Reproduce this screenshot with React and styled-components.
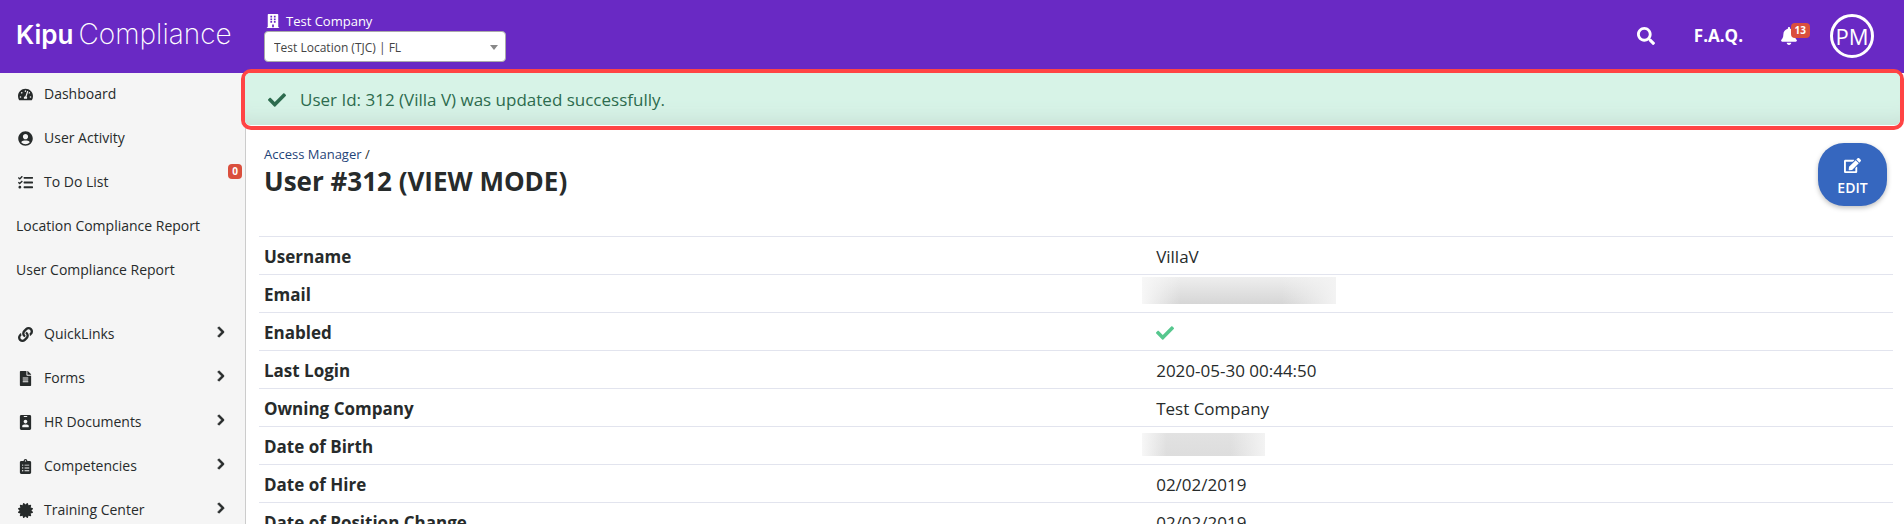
import styled, { createGlobalStyle } from "styled-components";
import {
  FaBell,
  FaBuilding,
  FaCertificate,
  FaCheck,
  FaChevronRight,
  FaClipboardList,
  FaEdit,
  FaFileAlt,
  FaIdBadge,
  FaLink,
  FaSearch,
  FaTachometerAlt,
  FaTasks,
  FaUserCircle,
} from "react-icons/fa";


const GlobalStyle = createGlobalStyle`
  * {
    box-sizing: border-box;
  }

  body {
    margin: 0;
    background-color: #FFFFFF;
    color: #272B2B;
    font-family: "Open Sans", "Noto Sans", sans-serif;
    font-size: 17px;
  }

  a {
    color: inherit;
    text-decoration: none;
  }

  button, select {
    font-family: inherit;
  }
`;

const Page = styled.div`
  height: 100vh;
  overflow: hidden;

  display: flex;
  flex-direction: column;
`;

const HeaderBar = styled.header`
  height: 73px;
  flex-shrink: 0;

  display: flex;
  align-items: center;

  background-color: #6929C4;
  color: #FFFFFF;
`;

const Logo = styled.a`
  padding: 0 0 4px 16px;
  width: 264px;

  display: flex;
  align-items: baseline;
  gap: 5px;

  font-family: Inter, sans-serif;
  font-size: 28px;
  font-weight: 200;
  line-height: 32px;
  white-space: nowrap;

  strong {
    font-size: 26px;
    font-weight: 600;
  }
`;

const LocationPicker = styled.div`
  width: 242px;
  height: 52px;

  display: flex;
  flex-direction: column;
`;

const CompanyLabel = styled.label`
  height: 20px;

  display: flex;
  align-items: center;
  gap: 6px;

  font-size: 13px;
  line-height: 20px;

  svg {
    margin-left: 2px;
    font-size: 14px;
  }
`;

const SelectBox = styled.div`
  position: relative;

  &::after {
    content: "";
    position: absolute;
    top: 14px;
    right: 8px;
    border: 4px solid transparent;
    border-top: 5px solid #888888;
    border-bottom: 0;
    pointer-events: none;
  }
`;

const LocationSelect = styled.select`
  padding: 2px 24px 0 9px;

  width: 100%;
  height: 31px;

  display: block;
  appearance: none;

  background-color: #FFFFFF;
  border: 1px solid #AAAAAA;
  border-radius: 4px;

  color: #444444;
  font-size: 12px;
`;

const HeaderActions = styled.nav`
  margin-left: auto;
  padding: 0 30px 1px 0;

  display: flex;
  align-items: center;
`;

const IconButton = styled.button`
  padding: 0;

  position: relative;
  display: flex;

  background: none;
  border: none;

  color: #FFFFFF;
  font-size: 18px;

  cursor: pointer;
`;

const FaqLink = styled.a`
  margin: 0 37px 0 39px;

  font-size: 17px;
  font-weight: 700;
  line-height: 24px;
`;

const Badge = styled.span`
  padding: 0 4px;

  position: absolute;
  top: ${ props => props.$top };
  right: ${ props => props.$right };

  background-color: #DA4F3D;
  border-radius: 4px;

  color: #FFFFFF;
  font-size: 10px;
  font-weight: 700;
  line-height: 15px;
`;

const Avatar = styled.a`
  margin-left: 32px;

  width: 44px;
  height: 44px;

  display: flex;
  align-items: center;
  justify-content: center;

  border: 3px solid #FFFFFF;
  border-radius: 50%;

  font-size: 22px;
`;

const Body = styled.div`
  min-height: 0;
  flex: 1;

  display: flex;
`;

const Sidebar = styled.nav`
  width: 246px;
  flex-shrink: 0;
  overflow: hidden;

  background-color: #F5F5F5;
  border-right: 1px solid #CCCCCC;
`;

const MenuList = styled.ul`
  margin: 0 0 20px 0;
  padding: 0;

  list-style: none;
`;

const MenuLink = styled.a`
  padding: 0 18px 2px 16px;

  position: relative;
  height: 44px;

  display: flex;
  align-items: center;

  font-size: 14px;
  line-height: 20px;
`;

const MenuIcon = styled.span`
  margin-right: 10px;

  width: 18px;

  display: flex;
  justify-content: center;

  font-size: 15px;
`;

const Chevron = styled(FaChevronRight)`
  margin: 0 0 4px auto;

  font-size: 12px;
  stroke: currentColor;
  stroke-width: 36px;
`;

const Main = styled.main`
  min-width: 0;
  flex: 1;
`;

const HighlightFrame = styled.div`
  margin: -4px 0 0 -5px;
  padding-bottom: 1px;

  position: relative;

  background-color: #FFFFFF;
  border: 4px solid #FF4444;
  border-radius: 10px;
`;

const Alert = styled.div`
  padding: 1px 23px 0 23px;

  height: 52px;

  display: flex;
  align-items: center;
  gap: 14px;

  background-color: #D7F3E7;
  border-radius: 5px;
  box-shadow: inset 0 -24px 20px -20px #C6DED3;

  color: #2D6B4E;
  line-height: 24px;
`;

const Heading = styled.div`
  padding: 13px 17px 0 18px;

  min-height: 106px;

  display: flex;
  align-items: flex-start;
  justify-content: space-between;
`;

const Breadcrumb = styled.nav`
  padding-top: 1px;

  font-size: 13px;
  line-height: 20px;

  a {
    color: #1F4478;
  }
`;

const Title = styled.h1`
  margin: 0;

  font-size: 26px;
  font-weight: 700;
  line-height: 34px;
`;

const EditButton = styled.button`
  padding: 5px 0 0 0;

  width: 69px;
  height: 63px;

  display: flex;
  flex-direction: column;
  align-items: center;
  justify-content: center;
  gap: 4px;

  background-color: #3667BF;
  border: none;
  border-radius: 26px;
  box-shadow: 0 2px 5px rgba(0, 0, 0, 0.25);

  color: #FFFFFF;
  font-size: 14px;
  font-weight: 600;
  line-height: 20px;

  cursor: pointer;

  svg {
    font-size: 17px;
  }
`;

const TableWrap = styled.div`
  padding: 0 11px 0 13px;
`;

const DetailsTable = styled.table`
  width: 100%;

  border-collapse: collapse;
  table-layout: fixed;

  th, td {
    padding: 3px 5px 0 5px;

    height: 38px;

    border-top: 1px solid #E2E4EE;

    line-height: 24px;
    text-align: left;
  }

  th {
    width: 54.6%;

    font-weight: 700;
  }

  svg {
    display: block;
    color: #56C78E;
  }
`;

const Redacted = styled.div`
  margin: ${ props => props.$tall ? "-10px 0 0 -14px" : "-5px 0 0 -14px" };

  width: ${ props => props.$width };
  height: ${ props => props.$tall ? "27px" : "23px" };

  background:
    linear-gradient(90deg, #F7F7F7, rgba(247, 247, 247, 0) 20%, rgba(243, 243, 243, 0) 72%, #F3F3F3),
    ${ props => props.$tall ? "linear-gradient(#EEEEEE, #D6D6D6)" : "linear-gradient(#E2E2E2, #DDDDDD)" };
`;


const reportLinks = [
  { label: "Dashboard", Icon: FaTachometerAlt },
  { label: "User Activity", Icon: FaUserCircle },
  { label: "To Do List", Icon: FaTasks, count: 0 },
  { label: "Location Compliance Report" },
  { label: "User Compliance Report" },
];

const sectionLinks = [
  { label: "QuickLinks", Icon: FaLink, expandable: true },
  { label: "Forms", Icon: FaFileAlt, expandable: true },
  { label: "HR Documents", Icon: FaIdBadge, expandable: true },
  { label: "Competencies", Icon: FaClipboardList, expandable: true },
  { label: "Training Center", Icon: FaCertificate, expandable: true },
];

const details = [
  { label: "Username", value: "VillaV" },
  { label: "Email", value: <Redacted $tall $width="194px" /> },
  { label: "Enabled", value: <FaCheck size={ 18 } title="Yes" /> },
  { label: "Last Login", value: "2020-05-30 00:44:50" },
  { label: "Owning Company", value: "Test Company" },
  { label: "Date of Birth", value: <Redacted $width="123px" /> },
  { label: "Date of Hire", value: "02/02/2019" },
  { label: "Date of Position Change", value: "02/02/2019" },
];


const Header = () => (
  <HeaderBar>
    <Logo href="#"><strong>Kipu</strong> Compliance</Logo>

    <LocationPicker>
      <CompanyLabel htmlFor="location"><FaBuilding />Test Company</CompanyLabel>
      <SelectBox>
        <LocationSelect id="location">
          <option>Test Location (TJC) | FL</option>
        </LocationSelect>
      </SelectBox>
    </LocationPicker>

    <HeaderActions>
      <IconButton aria-label="Search"><FaSearch /></IconButton>
      <FaqLink href="#">F.A.Q.</FaqLink>
      <IconButton aria-label="Notifications">
        <FaBell />
        <Badge $top="-4px" $right="-12px">13</Badge>
      </IconButton>
      <Avatar href="#">PM</Avatar>
    </HeaderActions>
  </HeaderBar>
);

const Menu = ({ links }) => (
  <MenuList>
    {links.map(({ label, Icon, count, expandable }) => (
      <li key={ label }>
        <MenuLink href="#">
          {Icon && <MenuIcon><Icon /></MenuIcon>}
          {label}
          {count != null && <Badge $top="3px" $right="3px">{ count }</Badge>}
          {expandable && <Chevron />}
        </MenuLink>
      </li>
    ))}
  </MenuList>
);

export default function App() {
  return (
    <Page>
      <GlobalStyle />
      <Header />

      <Body>
        <Sidebar>
          <Menu links={ reportLinks } />
          <Menu links={ sectionLinks } />
        </Sidebar>

        <Main>
          <HighlightFrame>
            <Alert role="status">
              <FaCheck size={ 18 } />
              User Id: 312 (Villa V) was updated successfully.
            </Alert>
          </HighlightFrame>

          <Heading>
            <div>
              <Breadcrumb><a href="#">Access Manager</a> /</Breadcrumb>
              <Title>User #312 (VIEW MODE)</Title>
            </div>
            <EditButton><FaEdit />EDIT</EditButton>
          </Heading>

          <TableWrap>
            <DetailsTable>
              <tbody>
                {details.map(({ label, value }) => (
                  <tr key={ label }>
                    <th scope="row">{ label }</th>
                    <td>{ value }</td>
                  </tr>
                ))}
              </tbody>
            </DetailsTable>
          </TableWrap>
        </Main>
      </Body>
    </Page>
  );
}
